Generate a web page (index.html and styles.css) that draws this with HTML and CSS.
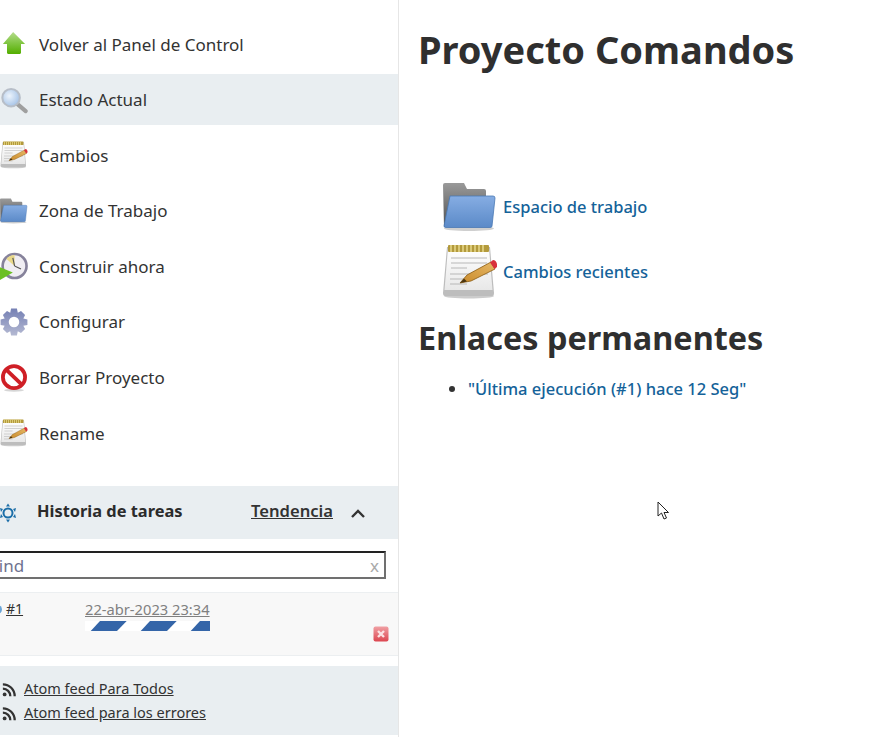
FILE: index.html
```html
<!DOCTYPE html>
<html lang="en">
<head>
    <meta charset="UTF-8">
    <meta name="viewport" content="width=device-width, initial-scale=1.0">
    <title>Proyecto Comandos</title>
    <link rel="stylesheet" href="styles.css">
</head>
<body>
    <svg class="defs" width="0" height="0">
        <defs>
            <linearGradient id="g-green" x1="0" y1="0" x2="0" y2="1"><stop offset="0" stop-color="#b5dc8c"/><stop offset="0.45" stop-color="#86c84a"/><stop offset="1" stop-color="#54ae00"/></linearGradient>
            <linearGradient id="g-folder" x1="0" y1="0" x2="0" y2="1"><stop offset="0" stop-color="#86ade3"/><stop offset="1" stop-color="#5b8ac8"/></linearGradient>
            <linearGradient id="g-back" x1="0" y1="0" x2="0" y2="1"><stop offset="0" stop-color="#9a9a9a"/><stop offset="1" stop-color="#4f4f4f"/></linearGradient>
            <linearGradient id="g-paper" x1="0" y1="0" x2="0" y2="1"><stop offset="0" stop-color="#fff"/><stop offset="1" stop-color="#e8e8e8"/></linearGradient>
            <linearGradient id="g-pencil" x1="0" y1="1" x2="1" y2="0"><stop offset="0" stop-color="#c98a2b"/><stop offset="1" stop-color="#e6b866"/></linearGradient>
            <linearGradient id="g-gear" x1="0" y1="0" x2="0" y2="1"><stop offset="0" stop-color="#7580b4"/><stop offset="1" stop-color="#b4b9d2"/></linearGradient>
            <linearGradient id="g-cancel" x1="0" y1="0" x2="0" y2="1"><stop offset="0" stop-color="#f0a0a4"/><stop offset="1" stop-color="#dc4650"/></linearGradient>
            <radialGradient id="g-lens" cx="0.4" cy="0.4" r="0.7"><stop offset="0" stop-color="#edf4fc"/><stop offset="1" stop-color="#9dbde4"/></radialGradient>
            <symbol id="i-up" viewBox="0 0 48 48">
                <path d="M22.5 3.5 L43 24 H36 V39 Q36 41 34 41 H14 Q12 41 12 39 V24 H5 Z" fill="url(#g-green)"/>
            </symbol>
            <symbol id="i-search" viewBox="0 0 48 48">
                <path d="M30 31 L44 43" stroke="#9f9f9f" stroke-width="7" stroke-linecap="round"/>
                <circle cx="19" cy="20" r="15" fill="url(#g-lens)" stroke="#b7bec8" stroke-width="3.5"/>
            </symbol>
            <symbol id="i-notes" viewBox="0 1 54 56">
                <ellipse cx="26" cy="53" rx="25" ry="2.5" fill="#ccc"/>
                <path d="M4 4 H47 L51 50 Q51 53 49 53 H2 Q0 53 0 50 Z" fill="#bdbdbd"/>
                <path d="M5 5 H46 L49.5 47 H1.5 Z" fill="url(#g-paper)"/>
                <rect x="5" y="2" width="41" height="7" rx="1" fill="#b39a3c"/>
                <path d="M8 2 V9 M12 2 V9 M16 2 V9 M20 2 V9 M24 2 V9 M28 2 V9 M32 2 V9 M36 2 V9 M40 2 V9" stroke="#e8d98a" stroke-width="1.5"/>
                <path d="M8 15 H44 M8 20 H44 M8 25 H24 M7 31 H45 M7 36 H30 M7 41 H24" stroke="#b8b8b8" stroke-width="1.2"/>
                <path d="M17 40 L24 32 L48 19 L52 26 L28 38 Z" fill="url(#g-pencil)" stroke="#8a5a10" stroke-width="0.8"/>
                <path d="M17 40 L21 35.5 L24 38.5 Z" fill="#4a3510"/>
                <path d="M47 19.5 L50 17 Q53 17 54 21 L54 24 L51.5 26 Z" fill="#d8313c"/>
            </symbol>
            <symbol id="i-folder" viewBox="0 0 54 50">
                <ellipse cx="26" cy="46.5" rx="25" ry="2.5" fill="#cfcfcf"/>
                <path d="M0 3 Q0 1 2 1 H21 L24 7 H41 Q43 7 43 9 V45 H1 Z" fill="url(#g-back)"/>
                <path d="M7 14 H50 Q52 14 52 16 L49 44 Q49 45.5 47 45.5 H3 Q1 45.5 1 44 Z" fill="url(#g-folder)" stroke="#4a78b4" stroke-width="0.8"/>
            </symbol>
            <symbol id="i-build" viewBox="0 0 48 48">
                <circle cx="25" cy="24" r="20.5" fill="#f0eef3" stroke="#86829b" stroke-width="4.5"/>
                <path d="M25 24 L11 12 A18 18 0 0 1 25 5 Z" fill="#e9d98a"/>
                <path d="M25 24 L22 10 M25 24 L36 29" stroke="#555" stroke-width="2"/>
                <path d="M0 26 L22 35 L0 48 Z" fill="#6cc024"/>
            </symbol>
            <symbol id="i-gear" viewBox="0 0 48 48">
                <path d="M19 1 H29 L30.5 8 L36 5 L43 12 L40 18 L47 19.5 V29 L40 30.5 L43 36 L36 43 L30.5 40 L29 47 H19 L17.5 40 L12 43 L5 36 L8 30.5 L1 29 V19.5 L8 18 L5 12 L12 5 L17.5 8 Z M24 15 A9 9 0 1 0 24 33 A9 9 0 1 0 24 15 Z" fill="url(#g-gear)" fill-rule="evenodd"/>
            </symbol>
            <symbol id="i-stop" viewBox="0 0 48 48">
                <ellipse cx="24" cy="45" rx="17" ry="2.5" fill="#d6d6d6"/>
                <circle cx="24" cy="22.5" r="19" fill="#fff" stroke="#cf1f26" stroke-width="6.5"/>
                <path d="M11 10 L37 35" stroke="#cf1f26" stroke-width="6.5"/>
            </symbol>
            <pattern id="p-stripes" width="50" height="10" patternUnits="userSpaceOnUse">
                <path d="M5.7 10 L15 0 H41.7 L32 10 Z" fill="#3465a8"/>
            </pattern>
        </defs>
    </svg>

    <div class="side">
        <nav class="tasks">
            <a class="task"><svg class="task-icon"><use href="#i-up"/></svg>Volver al Panel de Control</a>
            <a class="task active"><svg class="task-icon"><use href="#i-search"/></svg>Estado Actual</a>
            <a class="task"><svg class="task-icon"><use href="#i-notes"/></svg>Cambios</a>
            <a class="task"><svg class="task-icon"><use href="#i-folder"/></svg>Zona de Trabajo</a>
            <a class="task"><svg class="task-icon"><use href="#i-build"/></svg>Construir ahora</a>
            <a class="task"><svg class="task-icon"><use href="#i-gear"/></svg>Configurar</a>
            <a class="task"><svg class="task-icon"><use href="#i-stop"/></svg>Borrar Proyecto</a>
            <a class="task"><svg class="task-icon"><use href="#i-notes"/></svg>Rename</a>
        </nav>

        <div class="history">
            <div class="history-head">
                <svg class="history-icon" viewBox="0 0 20 20">
                    <circle cx="9" cy="10" r="4.5" fill="none" stroke="#1b6ea8" stroke-width="2"/>
                    <path d="M9 0.5 L11 3.5 H7 Z M9 19.5 L11 16.5 H7 Z M1 5 L4 6 L2 9 Z M17 5 L14 6 L16 9 Z M1 15 L4 14 L2 11 Z M17 15 L14 14 L16 11 Z" fill="#1b6ea8"/>
                </svg>
                <span class="history-title">Historia de tareas</span>
                <a class="trend">Tendencia</a>
                <svg class="chevron" viewBox="0 0 16 10"><path d="M2 8 L8 2 L14 8" fill="none" stroke="#333" stroke-width="2.4"/></svg>
            </div>
            <div class="find">
                <span class="find-text">Find</span>
                <span class="find-x">x</span>
            </div>
            <div class="build">
                <span class="ball"></span>
                <a class="build-no">#1</a>
                <div class="build-info">
                    <a class="build-date">22-abr-2023 23:34</a>
                    <svg class="progress" viewBox="0 0 125 10"><rect width="125" height="10" fill="url(#p-stripes)"/></svg>
                </div>
                <svg class="cancel" viewBox="0 0 16 16">
                    <rect x="0.5" y="0.5" width="15" height="15" rx="2" fill="url(#g-cancel)"/>
                    <path d="M5 5 L11 11 M11 5 L5 11" stroke="#fbe3e4" stroke-width="2.4"/>
                </svg>
            </div>
            <div class="feeds">
                <div class="feed">
                    <svg class="rss" viewBox="0 0 16 16"><circle cx="3" cy="13" r="2.2" fill="#333"/><path d="M1 6.5 A8.5 8.5 0 0 1 9.5 15 M1 1.5 A13.5 13.5 0 0 1 14.5 15" fill="none" stroke="#333" stroke-width="2.6"/></svg>
                    <a>Atom feed Para Todos</a>
                </div>
                <div class="feed">
                    <svg class="rss" viewBox="0 0 16 16"><circle cx="3" cy="13" r="2.2" fill="#333"/><path d="M1 6.5 A8.5 8.5 0 0 1 9.5 15 M1 1.5 A13.5 13.5 0 0 1 14.5 15" fill="none" stroke="#333" stroke-width="2.6"/></svg>
                    <a>Atom feed para los errores</a>
                </div>
            </div>
        </div>
    </div>

    <main class="content">
        <h1>Proyecto Comandos</h1>
        <div class="links">
            <a class="big-link"><svg class="big-icon"><use href="#i-folder"/></svg>Espacio de trabajo</a>
            <a class="big-link"><svg class="big-icon"><use href="#i-notes"/></svg>Cambios recientes</a>
        </div>
        <h2>Enlaces permanentes</h2>
        <ul>
            <li><a>"Última ejecución (#1) hace 12 Seg"</a></li>
        </ul>
        <svg class="cursor" viewBox="0 0 13 20">
            <path d="M1 1 V15 L4.5 12 L7 18 L9.5 17 L7 11.5 H11.5 Z" fill="#fff" stroke="#222" stroke-width="1"/>
        </svg>
    </main>
</body>
</html>
```

FILE: styles.css
```css
body {
    font-family: "Noto Sans", sans-serif;
    font-size: 17px;
    color: #333;
    background-color: #fff;
    margin: 0;
    display: flex;
    height: 737px;
    overflow: hidden;
}
.defs {
    position: absolute;
}
.side {
    width: 398px;
    flex: none;
    border-right: 1px solid #e6e6e6;
    padding-top: 18.5px;
}
.tasks {
    display: flex;
    flex-direction: column;
    gap: 4.6px;
}
.task {
    height: 51px;
    display: flex;
    align-items: center;
    gap: 11px;
    color: #333;
}
.task.active {
    background-color: #e9eef1;
}
.task-icon {
    width: 28px;
    height: 28px;
    flex: none;
}
.history {
    margin-top: 27.5px;
}
.history-head {
    height: 53px;
    background-color: #e9eef1;
    display: flex;
    align-items: center;
}
.history-icon {
    width: 20px;
    height: 20px;
    margin-left: -1px;
    flex: none;
}
.history-title {
    margin: 0 0 5px 18px;
    font-size: 16.4px;
    font-weight: 700;
    color: #2b2b2b;
}
.trend {
    margin: 0 0 5px auto;
    font-size: 16.6px;
    font-weight: 600;
    text-decoration: underline;
}
.chevron {
    width: 16px;
    height: 10px;
    margin: 2px 32px 0 17px;
}
.find {
    height: 28px;
    margin: 12px 12px 13px -4px;
    border: 2px solid #222;
    border-color: #222 #707070 #707070 #222;
    box-sizing: border-box;
    display: flex;
    align-items: center;
    justify-content: space-between;
    padding: 1px 5px 0 0;
    font-size: 17px;
}
.find-text {
    color: #6f7390;
    margin-left: -8px;
}
.find-x {
    color: #aaa;
}
.build {
    height: 64px;
    box-sizing: border-box;
    background-color: #f8f8f8;
    border-top: 1px solid #eceff1;
    border-bottom: 1px solid #eceff1;
    display: flex;
    font-size: 14px;
    padding-top: 6px;
    position: relative;
}
.ball {
    position: absolute;
    left: -7px;
    top: 12px;
    width: 9px;
    height: 9px;
    border-radius: 50%;
    background-color: #6aa5d8;
}
.build-no {
    margin-left: 6px;
    width: 79px;
    text-decoration: underline;
}
.build-info {
    width: 125px;
    font-size: 14.7px;
    line-height: 20px;
}
.build-date {
    color: #808080;
    text-decoration: underline;
    white-space: nowrap;
}
.progress {
    display: block;
    width: 125px;
    height: 10px;
    margin-top: 2px;
    background-color: #fff;
}
.cancel {
    position: absolute;
    right: 9px;
    bottom: 13px;
    width: 16px;
    height: 16px;
}
.feeds {
    margin-top: 10px;
    height: 69px;
    background-color: #e9eef1;
    font-size: 14.5px;
    padding-top: 10px;
    box-sizing: border-box;
}
.feed {
    display: flex;
    align-items: center;
    gap: 8px;
    height: 24px;
}
.feed a {
    text-decoration: underline;
}
.rss {
    width: 14px;
    height: 14px;
    margin-top: 4px;
    margin-left: 2px;
}
.content {
    flex: 1;
    padding-left: 19px;
    position: relative;
}
h1 {
    font-size: 38px;
    line-height: 44px;
    margin: 27px 0 0;
    color: #2f2f2f;
}
.links {
    margin: 103px 0 0 25px;
    display: flex;
    flex-direction: column;
}
.big-link {
    display: flex;
    align-items: center;
    gap: 6px;
    color: #146299;
    font-size: 16.5px;
    font-weight: 500;
    height: 65px;
}
.big-icon {
    width: 54px;
    height: 56px;
}
h2 {
    font-size: 32.4px;
    line-height: 40px;
    margin: 13px 0 0;
    color: #2f2f2f;
}
ul {
    margin: 20px 0 0;
    padding-left: 50px;
}
li a {
    color: #146299;
    font-size: 16.5px;
    font-weight: 500;
}
.cursor {
    position: absolute;
    left: 258px;
    top: 501px;
    width: 13px;
    height: 20px;
}
```
